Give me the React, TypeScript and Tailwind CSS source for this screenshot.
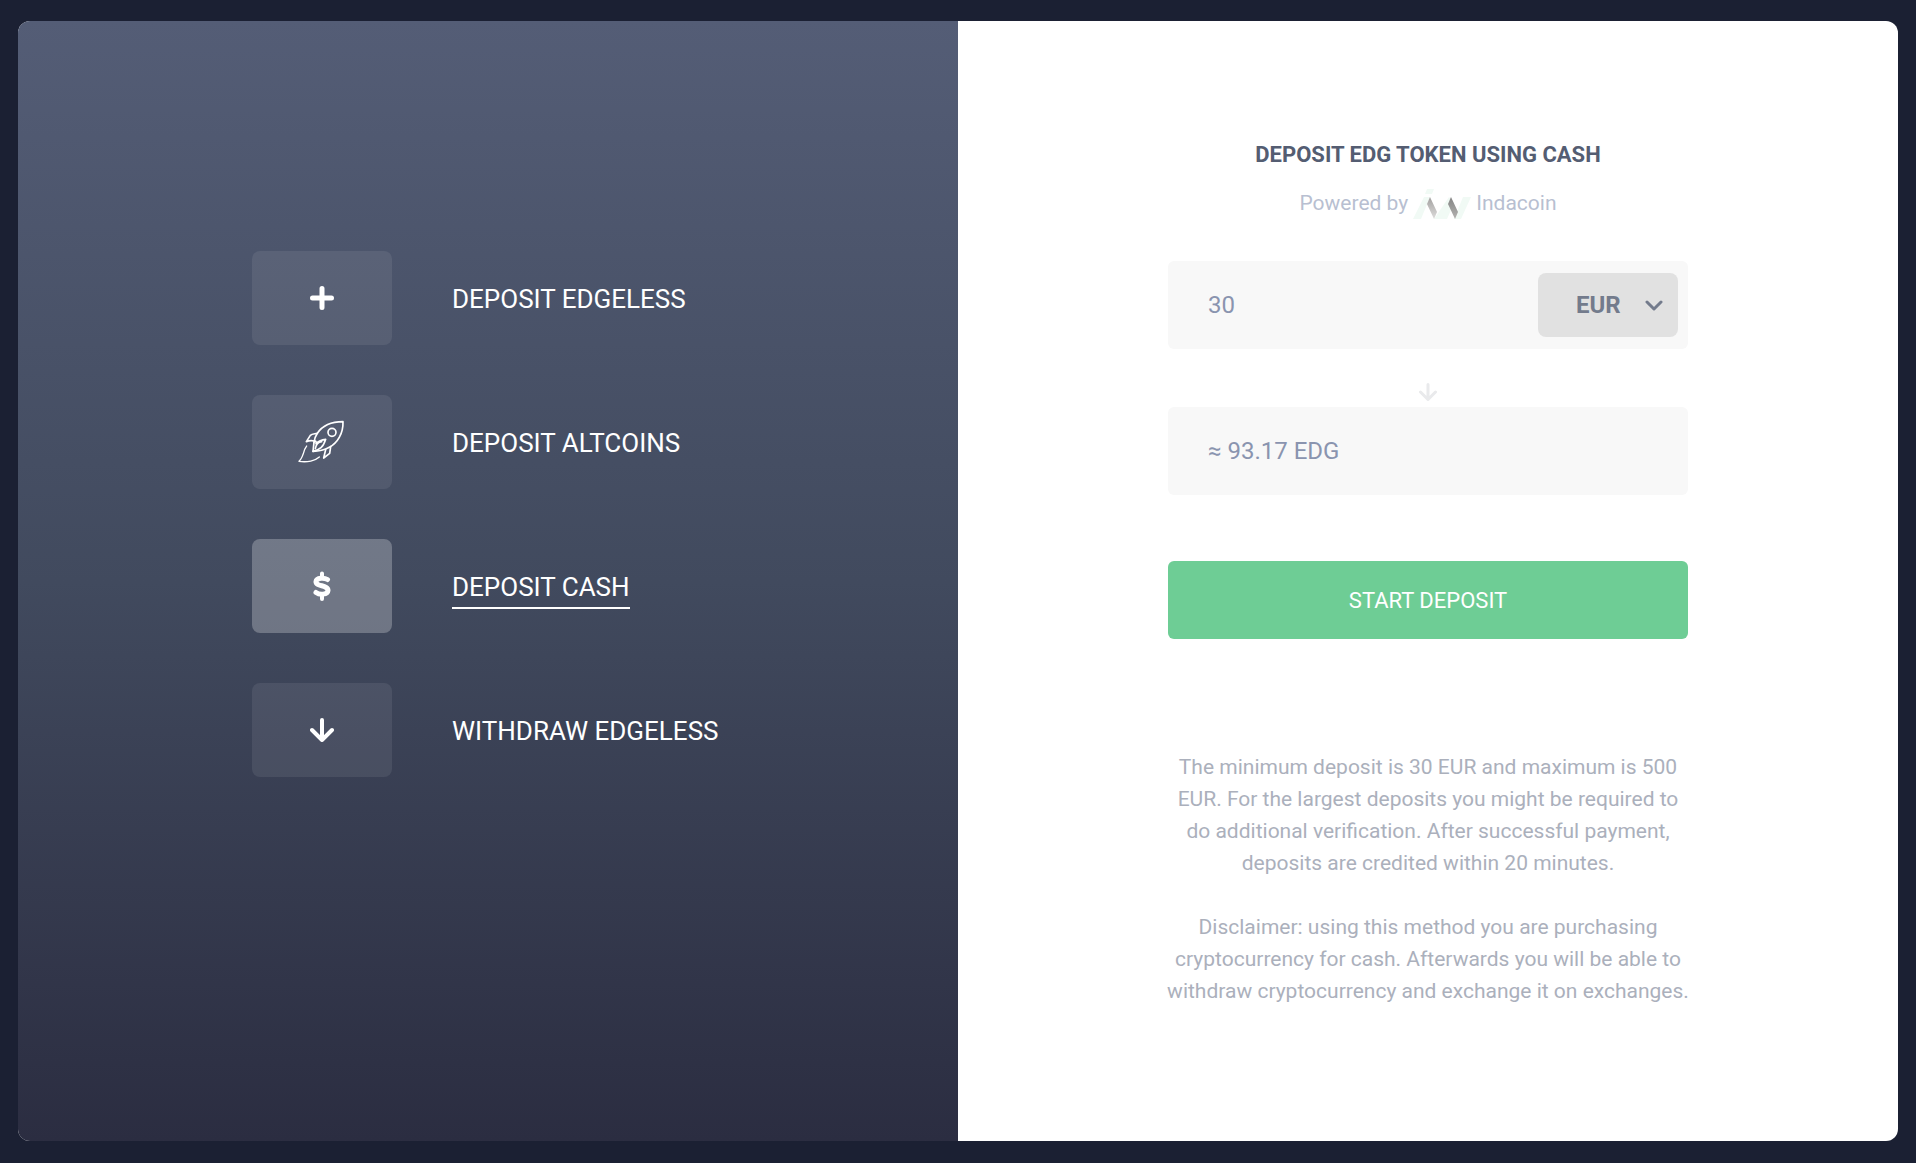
import React, { useState } from "react";
import clsx from "clsx";

const PlusIcon = () => (
  <svg viewBox="0 0 24 24" className="w-6 h-6" fill="none" stroke="currentColor" strokeWidth="5" strokeLinecap="round">
    <path d="M12 2.5v19M2.5 12h19" />
  </svg>
);

const RocketIcon = () => (
  <svg viewBox="24 24 144 144" className="w-12 h-12" fill="none" stroke="currentColor" strokeWidth="5" strokeLinecap="round" strokeLinejoin="round">
    <path d="M159 35C124 35 96 49 82 70C76 79 73 88 72 97L69 124C84 124 102 121 118 112C143 98 160 70 159 35Z" />
    <circle cx="126" cy="67" r="12" />
    <path d="M82 70C72 72 66 71 61 76L49 95C58 91 65 91 73 93" />
    <path d="M122 110L119 130L101 144L107 119" />
    <path d="M72 97C76 91 80 93 78 101C88 91 98 89 107 88C104 98 101 106 93 113C86 119 78 122 69 124" />
    <path d="M76 116C78 104 86 96 95 95" />
    <path d="M50 108L44 118C39 136 36 146 27 154C52 158 76 152 88 141" strokeWidth="4" />
  </svg>
);

const DollarIcon = () => (
  <svg viewBox="0 0 20 32" className="w-5 h-8" fill="none" stroke="currentColor" strokeWidth="5" strokeLinecap="round">
    <path d="M15.500 9.500C12.500 7.600 4.500 7.300 4 11.500C3.600 17 16.200 14.500 16 20.500C15.600 25 7.500 25 4 22.500" />
    <path d="M10 3.500v3M10 26v3" strokeWidth="4" />
  </svg>
);

const ArrowDownIcon = ({ className = "w-6 h-6" }: { className?: string }) => (
  <svg viewBox="0 0 24 24" className={className} fill="none" stroke="currentColor" strokeWidth="4" strokeLinecap="round" strokeLinejoin="round">
    <path d="M12 2v20M2 12l10 10 10-10" />
  </svg>
);

const IndacoinLogo = () => (
  <svg viewBox="0 0 60 32" className="w-[60px] h-8 mt-1" aria-hidden="true">
    <defs>
      <linearGradient id="inda-light" x1="0" y1="0" x2="0" y2="1">
        <stop offset="0" stopColor="#a3a1a0" />
        <stop offset="1" stopColor="#dddcdb" />
      </linearGradient>
      <linearGradient id="inda-dark" x1="0" y1="0" x2="0" y2="1">
        <stop offset="0" stopColor="#858585" />
        <stop offset="1" stopColor="#b3b2b0" />
      </linearGradient>
    </defs>
    <g fill="#f1faf5">
      <path d="M15 0h7l-2 5h-7z" />
      <path d="M12 8h6l-9 22H1z" />
      <path d="M37 8l5 6-7 16h-13z" />
      <path d="M51 8h8l-10 22h-7z" />
    </g>
    <path d="M18 8l7 15-3 7-7-15z" fill="url(#inda-light)" />
    <path d="M39 8l7 15-3 7-7-15z" fill="url(#inda-dark)" />
  </svg>
);

const menu = [
  { label: "DEPOSIT EDGELESS", icon: <PlusIcon /> },
  { label: "DEPOSIT ALTCOINS", icon: <RocketIcon /> },
  { label: "DEPOSIT CASH", icon: <DollarIcon /> },
  { label: "WITHDRAW EDGELESS", icon: <ArrowDownIcon /> },
];

export default function App() {
  const [active, setActive] = useState("DEPOSIT CASH");
  const [amount, setAmount] = useState("30");
  const [currency, setCurrency] = useState("EUR");

  return (
    <div className="min-h-screen flex bg-[#1b2033] px-[18px] pt-[21px] pb-[22px] font-['Roboto','Open_Sans',sans-serif]">
      <div className="flex-1 grid grid-cols-2 rounded-xl overflow-hidden bg-white">
        {/* MENU */}
        <nav className="flex flex-col items-start gap-[50px] pt-[230px] pl-[234px] bg-linear-to-b from-[#545d76] via-[#414a5e] to-[#2b2d41]">
          {menu.map(({ label, icon }) => (
            <button key={label} onClick={() => setActive(label)} className="flex items-center gap-[60px] text-white text-[26px] leading-9">
              <span className={clsx("w-[140px] h-[94px] rounded-lg flex items-center justify-center", active === label ? "bg-white/25" : "bg-white/8")}>
                {icon}
              </span>
              <span className={clsx("pt-1.5 pb-0.5 border-b-2", active === label ? "border-white" : "border-transparent")}>{label}</span>
            </button>
          ))}
        </nav>

        {/* DEPOSIT FORM */}
        <main className="flex flex-col items-center pt-[116px]">
          <form className="w-[520px] flex flex-col" onSubmit={(e) => e.preventDefault()}>
            <h1 className="text-center text-[22px] leading-9 font-bold text-[#545d72]">DEPOSIT EDG TOKEN USING CASH</h1>
            <p className="mt-3 flex items-center justify-center gap-1 text-[21px] leading-9 text-[#b8bfd1]">
              Powered by <IndacoinLogo /> Indacoin
            </p>

            <div className="mt-10 h-[88px] flex items-center rounded-md bg-[#f8f8f8] pl-10 pr-2.5">
              <input
                aria-label="Amount"
                value={amount}
                onChange={(e) => setAmount(e.target.value)}
                className="flex-1 min-w-0 bg-transparent text-2xl text-[#8a94af] outline-none"
              />
              <div className="relative">
                <select
                  aria-label="Currency"
                  value={currency}
                  onChange={(e) => setCurrency(e.target.value)}
                  className="w-[140px] h-16 pl-[38px] appearance-none rounded-lg bg-[#e1e1e1] text-2xl font-bold text-[#737b8c]"
                >
                  <option>EUR</option>
                  <option>USD</option>
                </select>
                <svg viewBox="0 0 18 12" className="absolute right-[15px] top-[27px] w-[18px] h-3 pointer-events-none text-[#737b8c]" fill="none" stroke="currentColor" strokeWidth="3" strokeLinecap="round" strokeLinejoin="round">
                  <path d="M2 2l7 7 7-7" />
                </svg>
              </div>
            </div>

            <div className="h-[58px] flex justify-center items-end pb-1.5 text-[#e9eaec]">
              <ArrowDownIcon className="w-[18px] h-[18px]" />
            </div>

            <output className="h-[88px] flex items-center rounded-md bg-[#f8f8f8] px-10 text-2xl text-[#8a94af]">≈ 93.17 EDG</output>

            <button type="submit" className="mt-[66px] h-[78px] rounded-md bg-[#6ecd95] text-[22px] text-white">
              START DEPOSIT
            </button>

            <div className="mt-28 -mx-1 flex flex-col gap-8 text-center text-[21px] leading-8 text-[#abb0bc]">
              <p>
                The minimum deposit is 30 EUR and maximum is 500 EUR. For the largest deposits you might be required to do additional verification. After
                successful payment, deposits are credited within 20 minutes.
              </p>
              <p>Disclaimer: using this method you are purchasing cryptocurrency for cash. Afterwards you will be able to withdraw cryptocurrency and exchange it on exchanges.</p>
            </div>
          </form>
        </main>
      </div>
    </div>
  );
}
